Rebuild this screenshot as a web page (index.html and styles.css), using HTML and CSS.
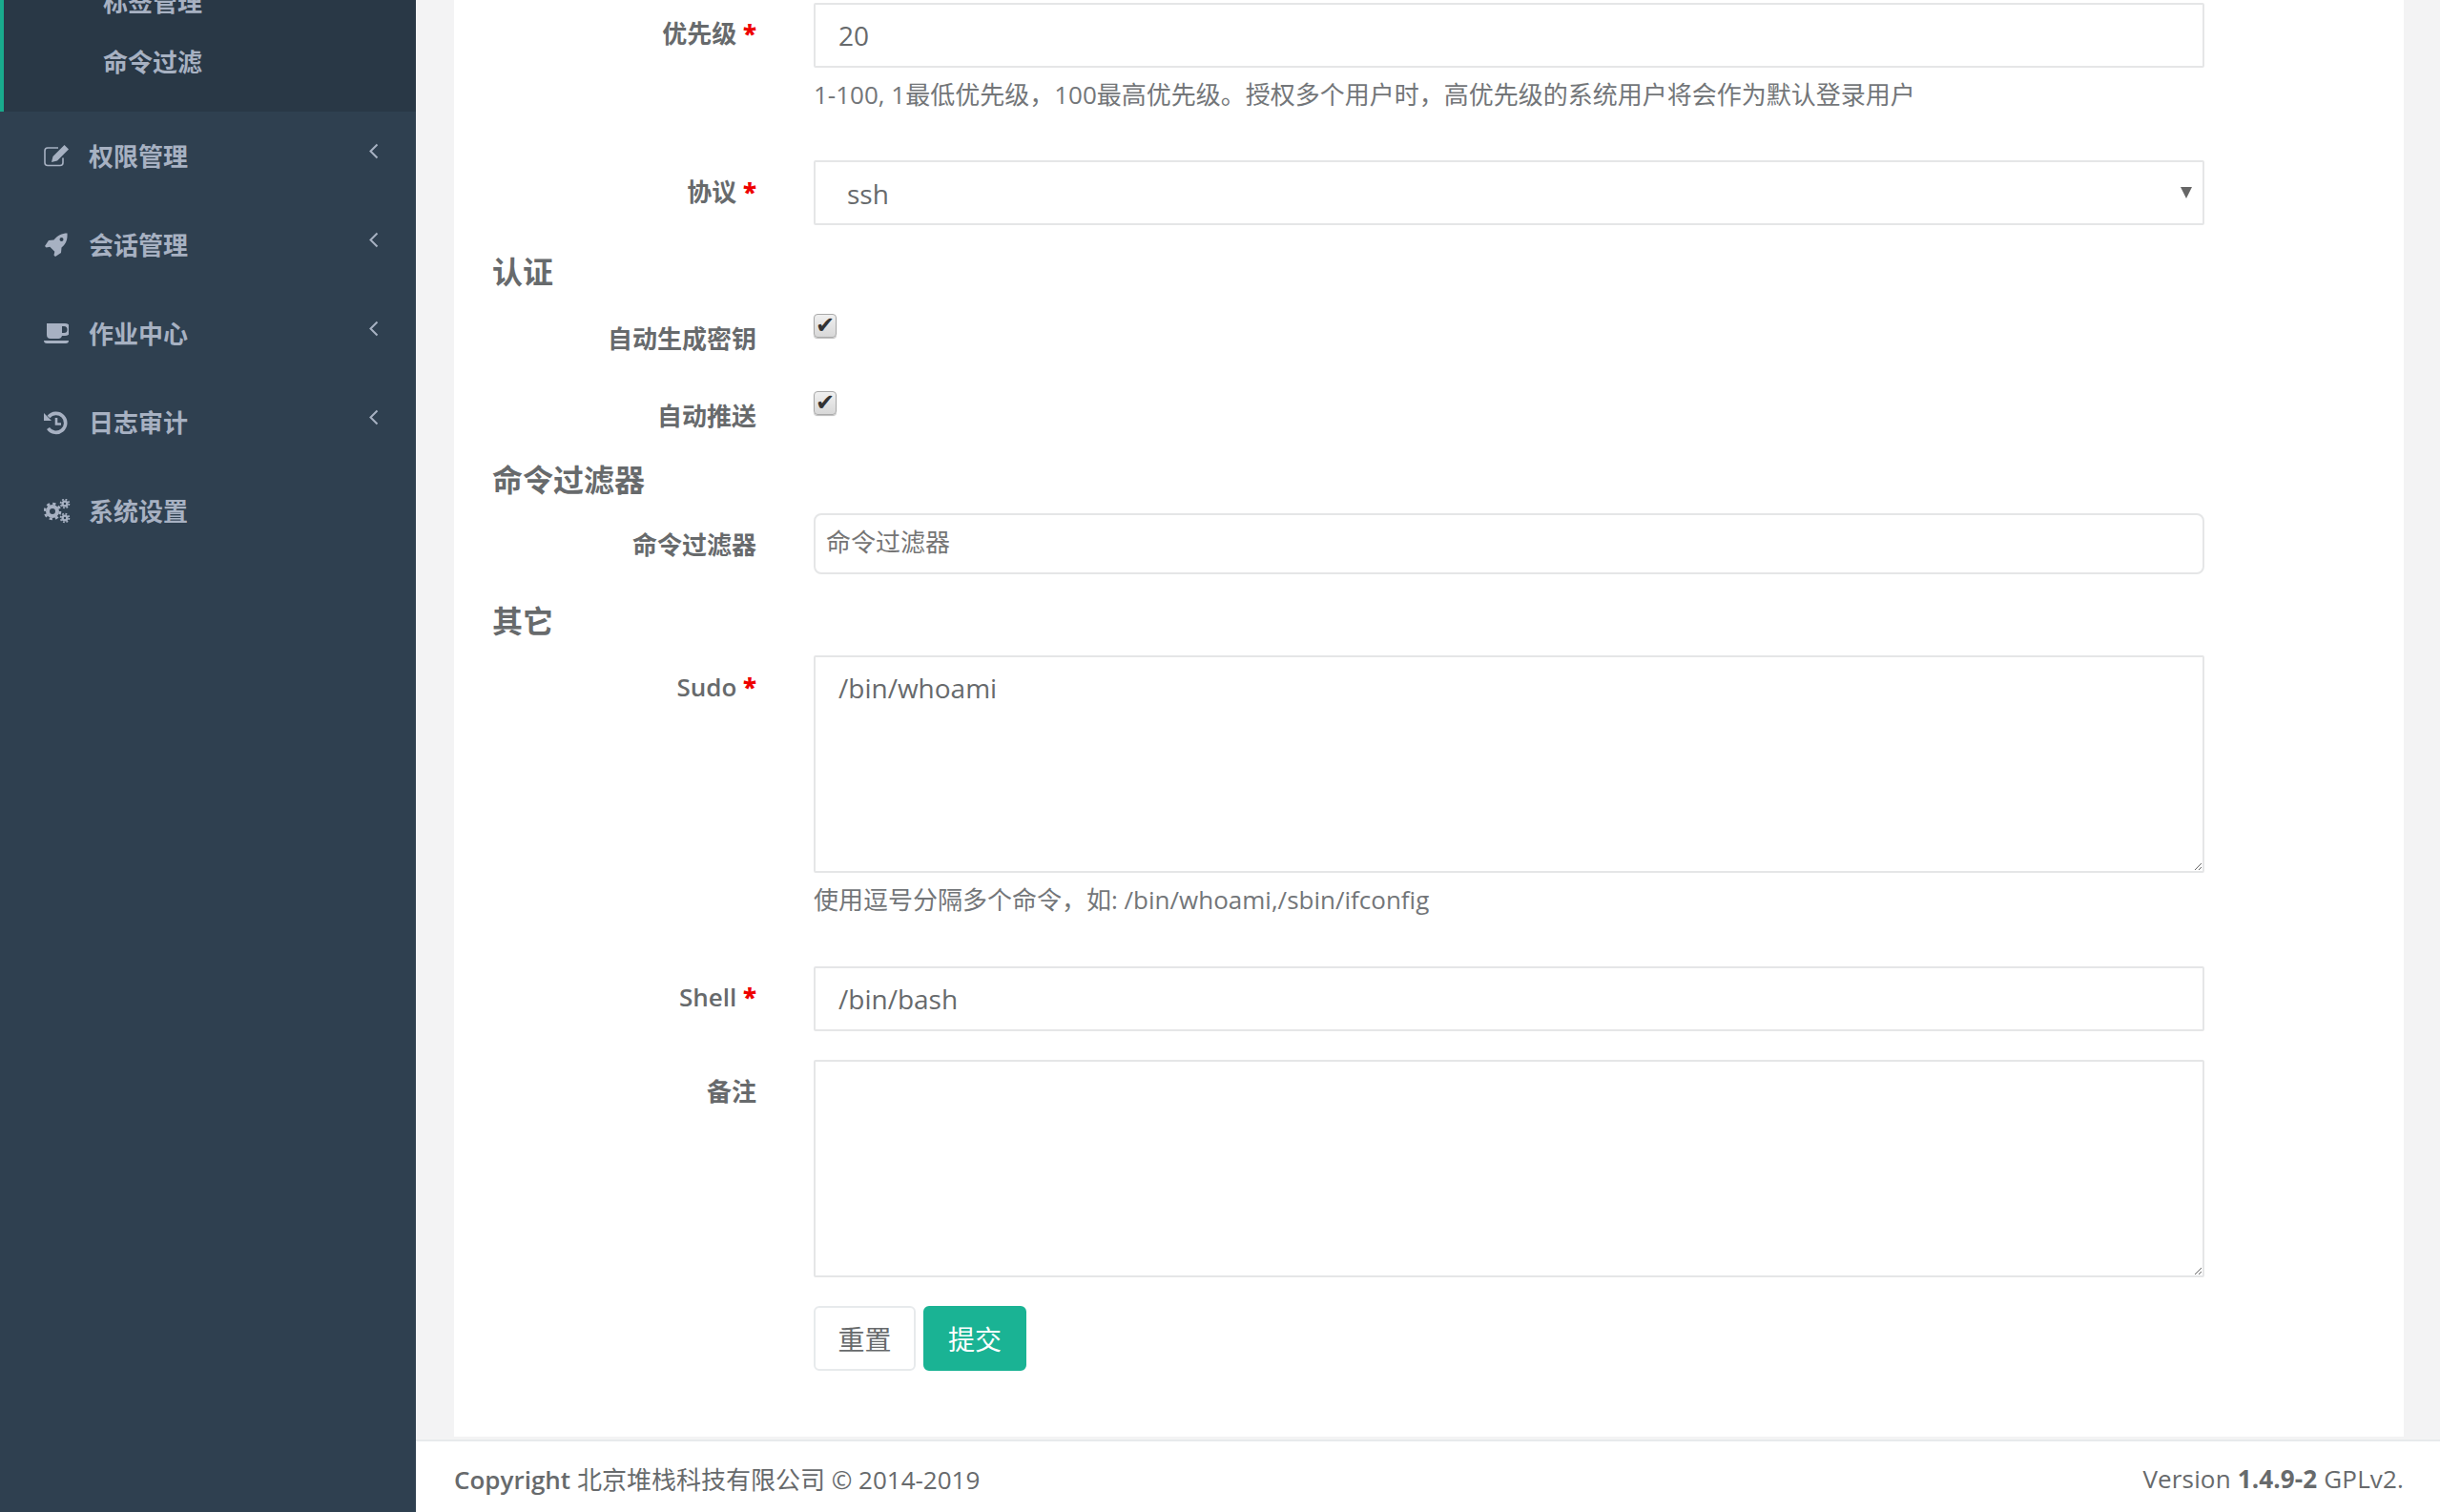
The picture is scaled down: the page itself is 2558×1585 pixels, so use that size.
FILE: index.html
```html
<!DOCTYPE html>
<html>
<head>
    <title>系统用户</title>
    <link rel="stylesheet" href="styles.css">
</head>
<body>
    <nav class="sidebar">
        <ul class="sub-nav">
            <li><a href="#">标签管理</a></li>
            <li><a href="#">命令过滤</a></li>
        </ul>
        <ul class="main-nav">
            <li><a href="#">
                <svg class="nav-icon" viewBox="0 0 26 26"><path d="M20 14.500v5a3 3 0 0 1-3 3H4a3 3 0 0 1-3-3V7a3 3 0 0 1 3-3h11" fill="none" stroke="currentColor" stroke-width="1.600"/><path d="M21.500 1l4.500 4.500-12 12-6 1.500 1.500-6z" fill="currentColor"/></svg>
                <span>权限管理</span>
                <svg class="chevron" viewBox="0 0 10 17"><path d="M8.500 1.500 1.500 8.500l7 7" fill="none" stroke="currentColor" stroke-width="2"/></svg>
            </a></li>
            <li><a href="#">
                <svg class="nav-icon" viewBox="0 0 26 26"><path d="M24.500 0.500C25 7 23 12 18.500 15.500L18 21l-6 4-1.500-1.500.8-3.800L6.300 14.700 2.500 15.500 1 14l4-6 5.500-.5C14 3 19 .5 24.500.5zM18.500 5a2 2 0 1 0 0 4 2 2 0 0 0 0-4z" fill="currentColor" fill-rule="evenodd"/></svg>
                <span>会话管理</span>
                <svg class="chevron" viewBox="0 0 10 17"><path d="M8.500 1.500 1.500 8.500l7 7" fill="none" stroke="currentColor" stroke-width="2"/></svg>
            </a></li>
            <li><a href="#">
                <svg class="nav-icon" viewBox="0 0 26 26"><path d="M3 2h19a4 4 0 0 1 0 13h-3a4 4 0 0 1-4 3H7a4 4 0 0 1-4-4zM19 5v7h2a3.500 3.500 0 0 0 0-7z" fill-rule="evenodd" fill="currentColor"/><path d="M0 20h26c0 2-1 3-3 3H3c-2 0-3-1-3-3z" fill="currentColor"/></svg>
                <span>作业中心</span>
                <svg class="chevron" viewBox="0 0 10 17"><path d="M8.500 1.500 1.500 8.500l7 7" fill="none" stroke="currentColor" stroke-width="2"/></svg>
            </a></li>
            <li><a href="#">
                <svg class="nav-icon" viewBox="0 0 26 26"><path d="M5 7A10 10 0 1 1 4.500 19" fill="none" stroke="currentColor" stroke-width="3.600"/><path d="M0 3l8 8H0z" fill="currentColor"/><path d="M13 8v6.500h5" fill="none" stroke="currentColor" stroke-width="2.600"/></svg>
                <span>日志审计</span>
                <svg class="chevron" viewBox="0 0 10 17"><path d="M8.500 1.500 1.500 8.500l7 7" fill="none" stroke="currentColor" stroke-width="2"/></svg>
            </a></li>
            <li><a href="#">
                <svg class="nav-icon nav-icon-wide" viewBox="0 0 28 26"><circle cx="9" cy="13" r="5" fill="none" stroke="currentColor" stroke-width="4"/><circle cx="9" cy="13" r="8" fill="none" stroke="currentColor" stroke-width="2.600" stroke-dasharray="3.200 3.080"/><circle cx="22" cy="5" r="2.400" fill="none" stroke="currentColor" stroke-width="2.400"/><circle cx="22" cy="5" r="4.400" fill="none" stroke="currentColor" stroke-width="1.800" stroke-dasharray="1.800 1.650"/><circle cx="22" cy="20" r="2.400" fill="none" stroke="currentColor" stroke-width="2.400"/><circle cx="22" cy="20" r="4.400" fill="none" stroke="currentColor" stroke-width="1.800" stroke-dasharray="1.800 1.650"/></svg>
                <span>系统设置</span>
            </a></li>
        </ul>
    </nav>

    <div class="page">
        <div class="content">
            <form class="panel">
                <div class="form-group">
                    <label class="form-label" for="priority">优先级 <b class="required">*</b></label>
                    <div class="field">
                        <input class="form-control" id="priority" type="text" value="20">
                        <span class="help-block">1-100, 1最低优先级，100最高优先级。授权多个用户时，高优先级的系统用户将会作为默认登录用户</span>
                    </div>
                </div>
                <div class="form-group group-protocol">
                    <label class="form-label" for="protocol">协议 <b class="required">*</b></label>
                    <div class="field select-wrap">
                        <select class="form-control select" id="protocol">
                            <option>ssh</option>
                        </select>
                    </div>
                </div>

                <h3 class="section-title title-auth">认证</h3>
                <div class="form-group group-check">
                    <label class="form-label" for="autoKey">自动生成密钥</label>
                    <div class="field"><input class="checkbox" id="autoKey" type="checkbox" checked></div>
                </div>
                <div class="form-group group-check group-check-next">
                    <label class="form-label" for="autoPush">自动推送</label>
                    <div class="field"><input class="checkbox" id="autoPush" type="checkbox" checked></div>
                </div>

                <h3 class="section-title title-filter">命令过滤器</h3>
                <div class="form-group group-filter">
                    <label class="form-label" for="filter">命令过滤器</label>
                    <div class="field"><input class="form-control filter-input" id="filter" type="text" placeholder="命令过滤器"></div>
                </div>

                <h3 class="section-title title-other">其它</h3>
                <div class="form-group group-sudo">
                    <label class="form-label label-en" for="sudo">Sudo <b class="required">*</b></label>
                    <div class="field">
                        <textarea class="form-control textarea" id="sudo">/bin/whoami</textarea>
                        <span class="help-block help-sudo">使用逗号分隔多个命令，如: /bin/whoami,/sbin/ifconfig</span>
                    </div>
                </div>
                <div class="form-group group-shell">
                    <label class="form-label label-en" for="shell">Shell <b class="required">*</b></label>
                    <div class="field"><input class="form-control" id="shell" type="text" value="/bin/bash"></div>
                </div>
                <div class="form-group group-comment">
                    <label class="form-label" for="comment">备注</label>
                    <div class="field"><textarea class="form-control textarea" id="comment"></textarea></div>
                </div>
                <div class="form-group group-buttons">
                    <div class="field buttons">
                        <button class="btn btn-default" type="reset">重置</button>
                        <button class="btn btn-primary" type="submit">提交</button>
                    </div>
                </div>
            </form>
        </div>
        <footer class="footer">
            <div><strong class="copyright">Copyright</strong> 北京堆栈科技有限公司 © 2014-2019</div>
            <div class="version">Version <strong>1.4.9-2</strong> GPLv2.</div>
        </footer>
    </div>
</body>
</html>
```

FILE: styles.css
```css
* {
    box-sizing: border-box;
}
html, body {
    height: 100%;
}
body {
    margin: 0;
    height: 1585px;
    overflow: hidden;
    display: flex;
    font-family: "Open Sans", "Noto Sans CJK SC", sans-serif;
    font-size: 26px;
    color: #676a6c;
    background-color: #f3f3f4;
}

/* sidebar */
.sidebar {
    width: 436px;
    flex: none;
    background-color: #2f4050;
    overflow: hidden;
}
.sidebar ul {
    list-style-type: none;
    margin: 0;
    padding: 0;
}
.sidebar a {
    color: #a7b1c2;
    text-decoration: none;
    font-weight: 700;
}
.sub-nav {
    height: 117px;
    background-color: #293846;
    border-left: 4px solid #19aa8d;
    overflow: hidden;
}
.sub-nav li {
    height: 63px;
    line-height: 63px;
    padding-left: 104px;
    position: relative;
    top: -29px;
}
.main-nav a {
    height: 93px;
    display: flex;
    align-items: center;
    padding-left: 46px;
}
.nav-icon {
    width: 26px;
    height: 26px;
    flex: none;
}
.nav-icon-wide {
    width: 28px;
    margin-right: -2px;
}
.main-nav span {
    margin-left: 21px;
    margin-top: -2px;
    width: 104px;
}
.chevron {
    width: 10px;
    height: 17px;
    margin-left: 190px;
    margin-top: -10px;
}

/* content */
.page {
    flex: 1;
    display: flex;
    flex-direction: column;
    min-width: 0;
}
.content {
    height: 1509px;
    padding: 0 38px 3px 40px;
    flex: none;
}
.panel {
    height: 100%;
    background-color: #fff;
    padding: 3px 0 0 40px;
}
.form-group {
    display: flex;
}
.form-label {
    width: 277px;
    margin-right: 60px;
    flex: none;
    text-align: right;
    font-weight: 700;
    line-height: 36px;
    padding-top: 14px;
}
.label-en {
    font-weight: 600;
}
.required {
    color: #e00;
}
.field {
    width: 1458px;
}
.form-control {
    display: block;
    width: 100%;
    height: 68px;
    border: 2px solid #e5e6e7;
    border-radius: 2px;
    padding: 12px 24px;
    background-color: #fff;
    color: #676a6c;
    font-family: inherit;
    font-size: 28px;
    outline: none;
}
.help-block {
    display: block;
    margin-top: 10px;
    line-height: 36px;
    color: #737679;
}
.group-protocol {
    margin-top: 51px;
}
.group-protocol .form-label {
    padding-top: 15px;
}
.select-wrap {
    position: relative;
}
.select {
    appearance: none;
    padding: 13px 24px 11px 33px;
}
.select-wrap::after {
    content: "";
    position: absolute;
    right: 13px;
    top: 28px;
    border-left: 6px solid transparent;
    border-right: 6px solid transparent;
    border-top: 12px solid #666;
}
.section-title {
    margin: 0;
    font-size: 32px;
    line-height: 44px;
    font-weight: 700;
}
.title-auth {
    margin-top: 27px;
}
.group-check {
    height: 64px;
    margin-top: 22px;
}
.group-check-next {
    margin-top: 17px;
}
.group-check .form-label {
    padding-top: 8px;
}
.checkbox {
    appearance: none;
    display: block;
    width: 24px;
    height: 25px;
    margin: 0;
    border: 1px solid #aaa;
    border-radius: 4px;
    background: linear-gradient(#f0f0f0, #d8d8d8);
    box-shadow: 0 1px 1px #bbb;
    text-align: center;
    color: #333;
    font-family: "DejaVu Sans", sans-serif;
    font-size: 24px;
    line-height: 22px;
    overflow: hidden;
}
.checkbox::before {
    content: "✔";
}
.title-filter {
    margin-top: 7px;
}
.group-filter {
    margin-top: 13px;
}
.group-filter .form-label {
    padding-top: 15px;
}
.filter-input {
    height: 64px;
    border-radius: 8px;
    padding: 8px 11px 12px;
    font-size: 26px;
}
.filter-input::placeholder {
    color: #757575;
}
.title-other {
    margin-top: 27px;
}
.group-sudo {
    margin-top: 14px;
}
.group-sudo .form-label {
    padding-top: 15px;
}
.textarea {
    height: 228px;
    resize: both;
    padding-top: 13px;
}
.help-sudo {
    margin-top: 10px;
}
.group-shell {
    margin-top: 52px;
}
.group-comment {
    margin-top: 30px;
}
.group-comment .form-label {
    padding-top: 15px;
}
.group-buttons {
    margin-top: 30px;
    padding-left: 337px;
}
.buttons {
    display: flex;
    gap: 8px;
}
.btn {
    width: 107px;
    height: 68px;
    border-radius: 6px;
    font-family: inherit;
    font-size: 28px;
    padding: 0;
}
.btn-default {
    background-color: #fff;
    border: 2px solid #e7eaec;
    color: #676a6c;
}
.btn-primary {
    width: 108px;
    background-color: #1ab394;
    border: 2px solid #1ab394;
    color: #fff;
}

/* footer */
.footer {
    flex: 1;
    display: flex;
    justify-content: space-between;
    align-items: center;
    background-color: #fff;
    border-top: 2px solid #e7eaec;
    padding: 4px 38px 0 40px;
    font-size: 26px;
}
.footer strong {
    font-weight: 700;
}
.footer .copyright {
    font-weight: 600;
}
.version {
    letter-spacing: 0.15px;
}
```
